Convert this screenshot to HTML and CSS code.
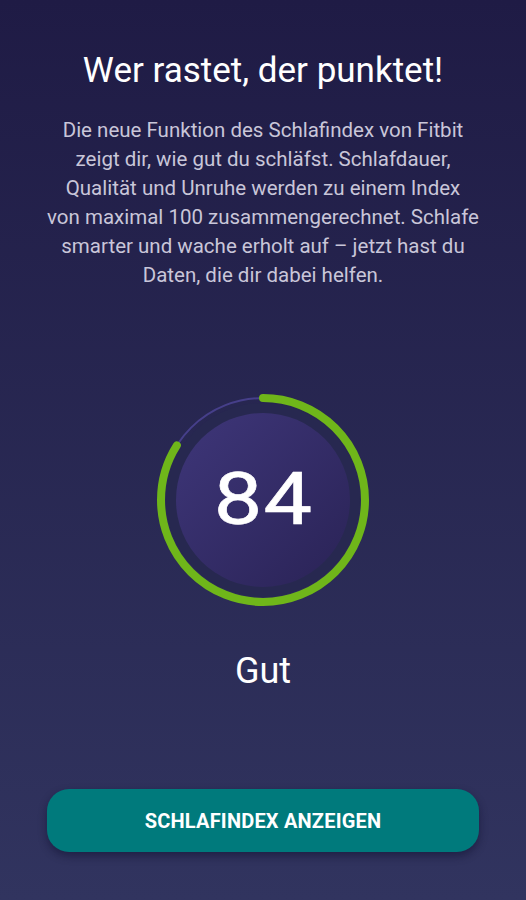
FILE: index.html
```html
<!DOCTYPE html>
<html lang="de">
<head>
  <meta charset="UTF-8" />
  <meta name="viewport" content="width=device-width, initial-scale=1.0" />
  <title>Schlafindex</title>
  <link rel="stylesheet" href="styles.css">
</head>
<body>
  <main class="screen">
    <h1 class="title">Wer rastet, der punktet!</h1>
    <p class="intro">Die neue Funktion des Schlafindex von Fitbit<br>zeigt dir, wie gut du schläfst. Schlafdauer,<br>Qualität und Unruhe werden zu einem Index<br>von maximal 100 zusammengerechnet. Schlafe<br>smarter und wache erholt auf – jetzt hast du<br>Daten, die dir dabei helfen.</p>

    <div class="score">
      <svg class="score-ring" width="220" height="220" viewBox="0 0 220 220">
        <defs>
          <linearGradient id="discFill" x1="0" y1="0" x2="1" y2="1">
            <stop offset="0" stop-color="#3e3679" />
            <stop offset="1" stop-color="#2a2356" />
          </linearGradient>
        </defs>
        <circle cx="110" cy="110" r="97" fill="#272850" />
        <circle cx="110" cy="110" r="87" fill="url(#discFill)" />
        <circle cx="110" cy="110" r="102" fill="none" stroke="#463f8a" stroke-width="2" />
        <circle cx="110" cy="110" r="102" fill="none" stroke="#6fb61a" stroke-width="8"
                stroke-linecap="round" pathLength="100" stroke-dasharray="84 100"
                transform="rotate(-90 110 110)" />
      </svg>
      <span class="score-value">84</span>
    </div>

    <p class="rating">Gut</p>

    <button class="cta" type="button">SCHLAFINDEX ANZEIGEN</button>
  </main>
</body>
</html>
```

FILE: styles.css
```css
* {
  box-sizing: border-box;
  margin: 0;
  padding: 0;
  font-family: Roboto, 'Noto Sans', sans-serif;
}

body {
  width: 526px;
  height: 900px;
  background: linear-gradient(to bottom, #1f1b45, #31345f);
  color: #fff;
  overflow: hidden;
}

.screen {
  display: flex;
  flex-direction: column;
  align-items: center;
  padding: 51px 30px 0;
}

.title {
  font-size: 35px;
  font-weight: 400;
  line-height: 40px;
  text-align: center;
}

.intro {
  margin-top: 25px;
  font-size: 20.5px;
  line-height: 29px;
  color: #c9c6d9;
  text-align: center;
}

.score {
  display: grid;
  place-items: center;
  margin-top: 100px;
}

.score-ring,
.score-value {
  grid-area: 1 / 1;
}

.score-value {
  font-size: 72px;
  line-height: 1;
  letter-spacing: 1px;
  transform: scaleX(1.2);
  -webkit-text-stroke: 0.6px #fff;
}

.rating {
  margin-top: 40px;
  font-size: 36px;
  line-height: 42px;
}

.cta {
  margin-top: 97px;
  width: 432px;
  height: 63px;
  border: none;
  border-radius: 22px;
  background-color: #007a7c;
  color: #fff;
  font-size: 20px;
  font-weight: 700;
  letter-spacing: 0.2px;
  box-shadow: 0 4px 8px rgba(10, 10, 40, 0.45);
  cursor: pointer;
}
```
